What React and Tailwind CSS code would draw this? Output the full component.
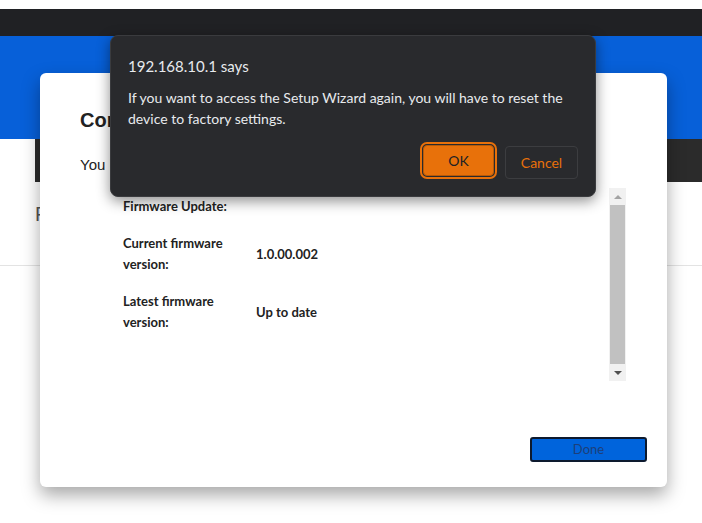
import { useState } from "react";

const dialogFont = { fontFamily: '"Segoe UI", Lato, "Noto Sans", sans-serif' };

function Scrollbar() {
  return (
    <div className="w-[17px] h-full flex flex-col bg-[#f1f1f1]">
      <div className="h-[17px] flex items-center justify-center">
        <div className="w-0 h-0 border-l-[4px] border-r-[4px] border-b-[4px] border-l-transparent border-r-transparent border-b-[#a3a3a3]" />
      </div>
      <div className="flex-1 mx-[1px] bg-[#c1c1c1]" />
      <div className="h-[17px] flex items-center justify-center">
        <div className="w-0 h-0 border-l-[4px] border-r-[4px] border-t-[4px] border-l-transparent border-r-transparent border-t-[#505050]" />
      </div>
    </div>
  );
}

function InfoRow({ label, value }) {
  return (
    <div className="flex items-center mt-[16px]">
      <div className="w-[133px] leading-[21px]">{label}</div>
      <div className="leading-[21px]">{value}</div>
    </div>
  );
}

export default function App() {
  const [open, setOpen] = useState(true);

  return (
    <div className="relative w-[702px] h-[523px] overflow-hidden bg-white" style={{ fontFamily: '"Liberation Sans", Arial, sans-serif' }}>

      {/* page behind the modal */}
      <div className="h-[9px] bg-white" />
      <div className="h-[27px] bg-[#202124]" />
      <div className="h-[103px] bg-[#0760d9]" />
      <div className="flex h-[43px]">
        <div className="w-[35px] bg-white" />
        <div className="flex-1 bg-[#2b2b2b]" />
      </div>
      <div className="pl-[35px] pt-[18px] pb-[37px] border-b border-[#e3e3e3]">
        <h2 className="text-[20px] leading-[28px] text-[#555] font-light">Firmware</h2>
      </div>

      {/* modal */}
      <div className="absolute left-[40px] top-[73px] w-[627px] h-[414px] bg-white rounded-[6px] shadow-[0_8px_18px_rgba(0,0,0,0.35)] flex flex-col">
        <h1 className="pl-[40px] pt-[34px] text-[20px] leading-[26px] font-bold text-[#222]">Congratulations</h1>
        <p className="pl-[40px] mt-[23px] text-[15px] leading-[18px] text-[#222]">You have completed the Setup Wizard.</p>

        <div className="flex mt-[14px] h-[193px] ml-[40px] mr-[41px]">
          <div className="flex-1 pl-[43px] pt-[8px] text-[13px] font-bold text-[#222]" style={{ fontFamily: 'Lato, "Noto Sans", sans-serif' }}>
            <div className="leading-[21px]">Firmware Update:</div>
            <InfoRow label={<>Current firmware<br />version:</>} value="1.0.00.002" />
            <InfoRow label={<>Latest firmware<br />version:</>} value="Up to date" />
          </div>
          <Scrollbar />
        </div>

        <div className="flex justify-end mt-auto mb-[25px] mr-[20px]">
          <button
            className="w-[117px] h-[25px] bg-[#0064dc] border-2 border-[#0d1a2e] rounded-[3px] text-[13px] text-[#1d3f7a]"
            style={{ fontFamily: 'Lato, "Noto Sans", sans-serif' }}
          >
            Done
          </button>
        </div>
      </div>

      {/* browser alert */}
      {open && (
        <div
          className="absolute left-[110px] top-[35px] w-[486px] h-[162px] bg-[#292a2d] rounded-[8px] shadow-[0_4px_14px_rgba(0,0,0,0.45)] border border-[#3a3b3e] px-[17px] pt-[19px]"
          style={dialogFont}
        >
          <div className="text-[15px] leading-[22px] text-[#e8eaed]">192.168.10.1 says</div>
          <p className="mt-[10px] text-[14px] leading-[21px] text-[#e8eaed]">
            If you want to access the Setup Wizard again, you will have to reset the device to factory settings.
          </p>
          <div className="flex justify-end gap-[9px] mt-[14px]">
            <button
              onClick={() => setOpen(false)}
              className="w-[71px] h-[31px] m-[2px] bg-[#e8710a] rounded-[4px] border border-[#b85a08] outline-2 outline-offset-[1px] outline-[#e8710a] text-[14px] text-[#202124]"
            >
              OK
            </button>
            <button
              onClick={() => setOpen(false)}
              className="w-[73px] h-[33px] mt-[3px] border border-[#3c3d40] rounded-[4px] text-[14px] text-[#e8710a]"
            >
              Cancel
            </button>
          </div>
        </div>
      )}
    </div>
  );
}
